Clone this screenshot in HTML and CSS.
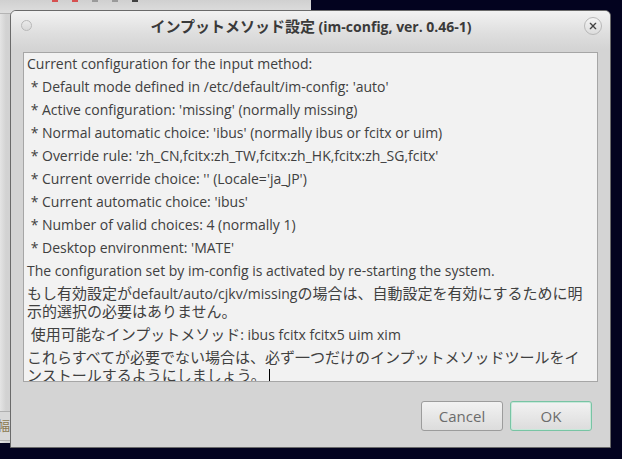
FILE: index.html
```html
<!DOCTYPE html>
<html lang="ja">
<head>
<meta charset="utf-8">
<title>im-config</title>
<link rel="stylesheet" href="styles.css">
</head>
<body>
<div class="desktop">
  <div class="behind">
    <div class="behind-bar"><span class="mark red"></span><span class="mark red"></span><span class="mark"></span><span class="mark"></span><span class="mark dark"></span></div>
    <div class="behind-body"></div>
    <div class="behind-foot"><span class="ja behind-text">幅</span></div>
  </div>
  <div class="dialog">
    <div class="titlebar">
      <span class="dot"></span>
      <span class="title"><span class="ja">インプットメソッド設定</span> (im-config, ver. 0.46-1)</span>
      <span class="close">
        <svg width="18" height="18" viewBox="0 0 18 18"><path d="M6 6 L12 12 M12 6 L6 12" stroke="#444" stroke-width="1.5" stroke-linecap="round" fill="none"/></svg>
      </span>
    </div>
    <div class="body">
      <div class="textview">
        <p>Current configuration for the input method:</p>
        <p> * Default mode defined in /etc/default/im-config: 'auto'</p>
        <p> * Active configuration: 'missing' (normally missing)</p>
        <p> * Normal automatic choice: 'ibus' (normally ibus or fcitx or uim)</p>
        <p> * Override rule: 'zh_CN,fcitx:zh_TW,fcitx:zh_HK,fcitx:zh_SG,fcitx'</p>
        <p> * Current override choice: '' (Locale='ja_JP')</p>
        <p> * Current automatic choice: 'ibus'</p>
        <p> * Number of valid choices: 4 (normally 1)</p>
        <p> * Desktop environment: 'MATE'</p>
        <p>The configuration set by im-config is activated by re-starting the system.</p>
        <p class="jp"><span class="ja">もし有効設定が</span>default/auto/cjkv/missing<span class="ja">の場合は、自動設定を有効にするために明示的選択の必要はありません。</span></p>
        <p class="jp"> <span class="ja">使用可能なインプットメソッド</span>: ibus fcitx fcitx5 uim xim</p>
        <p class="jp"><span class="ja">これらすべてが必要でない場合は、必ず一つだけのインプットメソッドツールをインストールするようにしましょう。</span> <span class="caret"></span></p>
      </div>
      <div class="buttons">
        <button class="btn">Cancel</button>
        <button class="btn ok">OK</button>
      </div>
    </div>
  </div>
</div>
</body>
</html>
```
FILE: styles.css
```css
html, body {
  margin: 0;
  padding: 0;
}
body {
  width: 622px;
  height: 459px;
  overflow: hidden;
  background: #03031f;
  font-family: "Open Sans", "Noto Sans CJK JP", sans-serif;
  color: #404040;
}
.desktop {
  position: relative;
  width: 622px;
  height: 459px;
}
.ja {
  font-family: "Noto Sans CJK JP", sans-serif;
}
.behind {
  position: absolute;
  left: 0;
  top: 0;
  width: 311px;
  height: 443px;
  background: linear-gradient(to right, #e4e4e4, #d2d2d2 6px, #d6d6d6);
  display: flex;
  flex-direction: column;
}
.behind-bar {
  height: 13px;
  border-bottom: 1px solid #b4b4b4;
  display: flex;
  gap: 14px;
  padding-left: 52px;
  background: linear-gradient(to bottom, #d0d0d0, #dedede);
}
.mark {
  width: 6px;
  height: 2px;
  background: #9a9a9a;
}
.mark.red { background: #d65050; }
.mark.dark { background: #404040; }
.behind-body {
  flex: 1;
}
.behind-foot {
  height: 28px;
  border-top: 1px solid #b0b0b0;
  border-bottom: 1px solid #b0b0b0;
  background: #d8d8d8;
  margin-bottom: 2px;
  overflow: hidden;
}
.behind-text {
  display: block;
  font-size: 13px;
  color: #8a7a50;
  line-height: 26px;
  margin-left: -3px;
}
.dialog {
  position: absolute;
  left: 10px;
  top: 10px;
  width: 599px;
  height: 436px;
  border: 1px solid #6a6a6a;
  border-radius: 6px 6px 0 0;
  background: #d4d4d4;
  display: flex;
  flex-direction: column;
  overflow: hidden;
}
.titlebar {
  height: 38px;
  flex: none;
  background: linear-gradient(to bottom, #f2f2f2, #dedede 60%, #d4d4d4);
  display: flex;
  align-items: center;
  padding: 0 8px 0 10px;
}
.dot {
  width: 9px;
  height: 9px;
  border-radius: 50%;
  border: 1px solid #b8b8b8;
  background: linear-gradient(#eaeaea, #d8d8d8);
  margin-top: -9px;
}
.title {
  flex: 1;
  text-align: center;
  font-weight: bold;
  font-size: 14px;
  color: #3a3a3a;
  margin-top: -9px;
  padding-left: 6px;
}
.title .ja {
  font-weight: bold;
  font-size: 15px;
}
.close {
  width: 16px;
  height: 16px;
  border-radius: 50%;
  border: 1px solid #b8b8b8;
  background: linear-gradient(#f4f4f4, #dcdcdc);
  display: flex;
  align-items: center;
  justify-content: center;
  margin-top: -9px;
}
.close svg {
  width: 16px;
  height: 16px;
}
.body {
  flex: 1;
  display: flex;
  flex-direction: column;
  padding: 3px 12px 0 12px;
}
.textview {
  height: 326px;
  background: #f2f2f2;
  border: 1px solid #a6a6a6;
  padding: 2px 10px 0 3px;
  font-size: 14px;
  overflow: hidden;
}
.textview p {
  margin: 0;
  padding: 0 0 5px 0;
  line-height: 18px;
  white-space: pre-wrap;
}
.textview p .ja {
  font-size: 15px;
  line-height: 10px;
}
.caret {
  display: inline-block;
  width: 1px;
  height: 15px;
  background: #000;
  vertical-align: -3px;
}
.buttons {
  display: flex;
  justify-content: flex-end;
  gap: 7px;
  padding: 19px 6px 0 0;
}
.btn {
  width: 82px;
  height: 30px;
  border: 1px solid #9c9c9c;
  border-radius: 3px;
  background: linear-gradient(#f2f2f2, #dcdcdc);
  font-family: "Open Sans", sans-serif;
  font-size: 15px;
  color: #6c6c6c;
  padding: 0;
}
.btn.ok {
  border: 1px solid #78c4a4;
  box-shadow: inset 0 0 0 1px #c8e8da;
}
```
